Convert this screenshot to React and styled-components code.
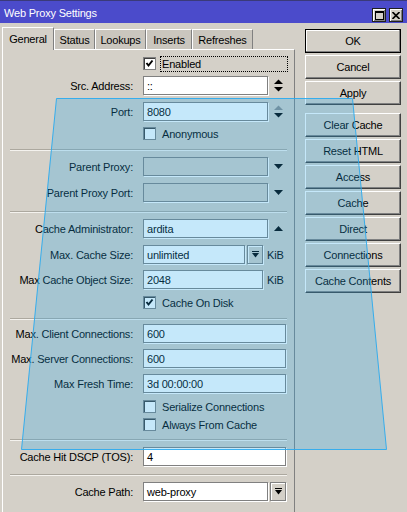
import React from 'react';
import styled, { createGlobalStyle } from 'styled-components';

const GlobalStyle = createGlobalStyle`
    body {
        margin: 0;
        background: #d4d0c8;
        font-family: "Liberation Sans", Arial, sans-serif;
        font-size: 11px;
        letter-spacing: -0.2px;
        color: #000;
    }
`;

const Window = styled.div`
    position: relative;
    width: 407px;
    height: 512px;
    overflow: hidden;
    background: #d4d0c8;
`;

const TitleBar = styled.div`
    height: 23px;
    display: flex;
    align-items: center;
    justify-content: space-between;
    padding: 2px 4px 0 4px;
    box-sizing: border-box;
    border-top: 1px solid #3a3a7a;
    background: #4b4bcb;
    color: #fff;
`;

const CaptionButtons = styled.div`
    display: flex;
    gap: 3px;
    margin-top: 4px;
`;

const CaptionButton = styled.div`
    width: 14px;
    height: 14px;
    box-sizing: border-box;
    display: flex;
    align-items: center;
    justify-content: center;
    background: #d4d0c8;
    border: 1px solid #202020;
    box-shadow: inset 1px 1px 0 #fff, inset -1px -1px 0 #808080;
`;

const Body = styled.div`
    display: flex;
    align-items: flex-start;
`;

const LeftColumn = styled.div`
    margin-left: 2px;
    width: 293px;
    padding-top: 4px;
`;

const TabStrip = styled.div`
    display: flex;
    align-items: flex-end;
    height: 22px;
    position: relative;
    z-index: 1;
`;

const Tab = styled.div`
    width: ${(p) => p.$w}px;
    height: ${(p) => (p.$active ? 23 : 20)}px;
    box-sizing: border-box;
    display: flex;
    align-items: center;
    justify-content: center;
    padding-top: ${(p) => (p.$active ? 0 : 1)}px;
    margin-bottom: ${(p) => (p.$active ? -1 : 0)}px;
    background: ${(p) => (p.$active ? '#d4d0c8' : '#cac6be')};
    border-top: 1px solid #fff;
    border-left: 1px solid #fff;
    border-right: 1px solid #808080;
`;

const Panel = styled.div`
    height: 466px;
    box-sizing: border-box;
    border-top: 1px solid #fff;
    border-left: 1px solid #fff;
    border-right: 1px solid #808080;
    padding-top: 5px;
    display: flex;
    flex-direction: column;
`;

const Row = styled.div`
    display: flex;
    align-items: center;
    height: ${(p) => p.$h || 19}px;
    margin-top: ${(p) => p.$mt}px;
`;

const Label = styled.div`
    width: 130px;
    margin-right: 10px;
    text-align: right;
    white-space: nowrap;
`;

const Field = styled.div`
    width: ${(p) => p.$w}px;
    height: 19px;
    box-sizing: border-box;
    display: flex;
    align-items: center;
    padding-left: 3px;
    background: ${(p) => (p.$disabled ? '#d4d0c8' : '#fff')};
    border: 1px solid #808080;
    box-shadow: 1px 1px 0 #fff;
`;

const IconSlot = styled.div`
    width: 16px;
    margin-left: 2px;
    display: flex;
    align-items: center;
    justify-content: center;
`;

const DropButton = styled.div`
    width: 16px;
    height: 19px;
    margin-left: 2px;
    box-sizing: border-box;
    display: flex;
    align-items: center;
    justify-content: center;
    background: #d4d0c8;
    border: 1px solid #808080;
    box-shadow: inset 1px 1px 0 #fff, 1px 1px 0 #fff;
`;

const Unit = styled.span`
    margin-left: 4px;
`;

const CheckRow = styled.div`
    display: flex;
    align-items: center;
    height: 17px;
    margin-top: ${(p) => p.$mt}px;
    padding-left: 140px;
`;

const Box = styled.div`
    width: 13px;
    height: 13px;
    box-sizing: border-box;
    display: flex;
    align-items: center;
    justify-content: center;
    background: #fff;
    border: 1px solid #808080;
    box-shadow: inset 1px 1px 0 #404040;
`;

const CheckText = styled.span`
    margin-left: 4px;
    padding: 1px 2px 1px 1px;
    flex: ${(p) => (p.$focused ? 1 : 'none')};
    margin-right: ${(p) => (p.$focused ? 6 : 0)}px;
    border: 1px dotted ${(p) => (p.$focused ? '#000' : 'transparent')};
`;

const Separator = styled.div`
    height: 1px;
    margin: ${(p) => p.$mt}px 7px 0 7px;
    background: #aca89f;
    border-bottom: 1px solid #f4f2ee;
`;

const RightColumn = styled.div`
    margin-left: 10px;
    width: 96px;
    padding-top: 6px;
    display: flex;
    flex-direction: column;
    gap: 2px;
`;

const Button = styled.div`
    height: 24px;
    box-sizing: border-box;
    display: flex;
    align-items: center;
    justify-content: center;
    margin-top: ${(p) => p.$mt || 0}px;
    background: #d4d0c8;
    border: 1px solid ${(p) => (p.$default ? '#000' : '#404040')};
    border-top-color: ${(p) => (p.$default ? '#000' : '#fff')};
    border-left-color: ${(p) => (p.$default ? '#000' : '#fff')};
    box-shadow: inset -1px -1px 0 #808080
        ${(p) => (p.$default ? ', inset 1px 1px 0 #fff' : '')};
`;

const Overlay = styled.svg`
    position: absolute;
    left: 0;
    top: 0;
    pointer-events: none;
`;

const UpDown = ({ upColor = '#000' }) => (
    <svg width="9" height="13" viewBox="0 0 9 13">
        <polygon points="0,5 4.5,0.5 9,5" fill={upColor} />
        <polygon points="0,8 4.5,12.5 9,8" fill="#000" />
    </svg>
);

const Down = () => (
    <svg width="9" height="5" viewBox="0 0 9 5">
        <polygon points="0,0 9,0 4.5,5" fill="#000" />
    </svg>
);

const Up = () => (
    <svg width="9" height="5" viewBox="0 0 9 5">
        <polygon points="0,5 9,5 4.5,0" fill="#000" />
    </svg>
);

const DropIcon = () => (
    <svg width="7" height="7" viewBox="0 0 7 7">
        <rect x="0" y="0" width="7" height="1" fill="#000" />
        <polygon points="0,2 7,2 3.5,6.5" fill="#000" />
    </svg>
);

const Tick = () => (
    <svg width="9" height="9" viewBox="0 0 9 9">
        <path d="M1.5 4 L3.5 6.5 L7.5 1.5" stroke="#000" strokeWidth="2" fill="none" />
    </svg>
);

const Check = ({ checked, label, mt, focused }) => (
    <CheckRow $mt={mt}>
        <Box>{checked && <Tick />}</Box>
        <CheckText $focused={focused}>{label}</CheckText>
    </CheckRow>
);

const tabs = [
    ['General', 52],
    ['Status', 41],
    ['Lookups', 51],
    ['Inserts', 46],
    ['Refreshes', 61],
];

const buttons = [
    ['OK', 0, true],
    ['Cancel', 0],
    ['Apply', 0],
    ['Clear Cache', 6],
    ['Reset HTML', 0],
    ['Access', 0],
    ['Cache', 0],
    ['Direct', 0],
    ['Connections', 0],
    ['Cache Contents', 0],
];

const App = () => (
    <Window>
        <GlobalStyle />
        <TitleBar>
            <span>Web Proxy Settings</span>
            <CaptionButtons>
                <CaptionButton>
                    <svg width="9" height="9" viewBox="0 0 9 9">
                        <rect x="0.5" y="0.5" width="8" height="8" fill="none" stroke="#000" />
                        <rect x="0" y="0" width="9" height="2" fill="#000" />
                    </svg>
                </CaptionButton>
                <CaptionButton>
                    <svg width="8" height="7" viewBox="0 0 8 7">
                        <path d="M0.5 0 L7.5 7 M7.5 0 L0.5 7" stroke="#000" strokeWidth="1.6" />
                    </svg>
                </CaptionButton>
            </CaptionButtons>
        </TitleBar>
        <Body>
            <LeftColumn>
                <TabStrip>
                    {tabs.map(([name, w], i) => (
                        <Tab key={name} $w={w} $active={i === 0}>
                            {name}
                        </Tab>
                    ))}
                </TabStrip>
                <Panel>
                    <Check checked label="Enabled" mt={0} focused />
                    <Row $mt={4}>
                        <Label>Src. Address:</Label>
                        <Field $w={125}>::</Field>
                        <IconSlot>
                            <UpDown />
                        </IconSlot>
                    </Row>
                    <Row $mt={7}>
                        <Label>Port:</Label>
                        <Field $w={125}>8080</Field>
                        <IconSlot>
                            <UpDown upColor="#8c8c8c" />
                        </IconSlot>
                    </Row>
                    <Check label="Anonymous" mt={4} />
                    <Separator $mt={7} />
                    <Row $mt={6}>
                        <Label>Parent Proxy:</Label>
                        <Field $w={125} $disabled />
                        <IconSlot>
                            <Down />
                        </IconSlot>
                    </Row>
                    <Row $mt={7}>
                        <Label>Parent Proxy Port:</Label>
                        <Field $w={125} $disabled />
                        <IconSlot>
                            <Down />
                        </IconSlot>
                    </Row>
                    <Separator $mt={9} />
                    <Row $mt={6}>
                        <Label>Cache Administrator:</Label>
                        <Field $w={125}>ardita</Field>
                        <IconSlot>
                            <Up />
                        </IconSlot>
                    </Row>
                    <Row $mt={7}>
                        <Label>Max. Cache Size:</Label>
                        <Field $w={102}>unlimited</Field>
                        <DropButton>
                            <DropIcon />
                        </DropButton>
                        <Unit>KiB</Unit>
                    </Row>
                    <Row $mt={6}>
                        <Label>Max Cache Object Size:</Label>
                        <Field $w={120}>2048</Field>
                        <Unit>KiB</Unit>
                    </Row>
                    <Check checked label="Cache On Disk" mt={5} />
                    <Separator $mt={7} />
                    <Row $mt={4}>
                        <Label>Max. Client Connections:</Label>
                        <Field $w={143}>600</Field>
                    </Row>
                    <Row $mt={6}>
                        <Label>Max. Server Connections:</Label>
                        <Field $w={143}>600</Field>
                    </Row>
                    <Row $mt={6}>
                        <Label>Max Fresh Time:</Label>
                        <Field $w={143}>3d 00:00:00</Field>
                    </Row>
                    <Check label="Serialize Connections" mt={5} />
                    <Check label="Always From Cache" mt={1} />
                    <Separator $mt={6} />
                    <Row $mt={6}>
                        <Label>Cache Hit DSCP (TOS):</Label>
                        <Field $w={143}>4</Field>
                    </Row>
                    <Separator $mt={8} />
                    <Row $mt={6}>
                        <Label>Cache Path:</Label>
                        <Field $w={125}>web-proxy</Field>
                        <DropButton>
                            <DropIcon />
                        </DropButton>
                    </Row>
                </Panel>
            </LeftColumn>
            <RightColumn>
                {buttons.map(([name, mt, isDefault]) => (
                    <Button key={name} $mt={mt} $default={isDefault}>
                        {name}
                    </Button>
                ))}
            </RightColumn>
        </Body>
        <Overlay width="407" height="512" viewBox="0 0 407 512">
            <polygon
                points="56.5,98.5 352.5,98.5 386.5,449.5 21.5,449.5"
                fill="rgba(30, 165, 235, 0.26)"
                stroke="rgba(40, 170, 240, 0.9)"
                strokeWidth="1"
            />
        </Overlay>
    </Window>
);

export default App;
